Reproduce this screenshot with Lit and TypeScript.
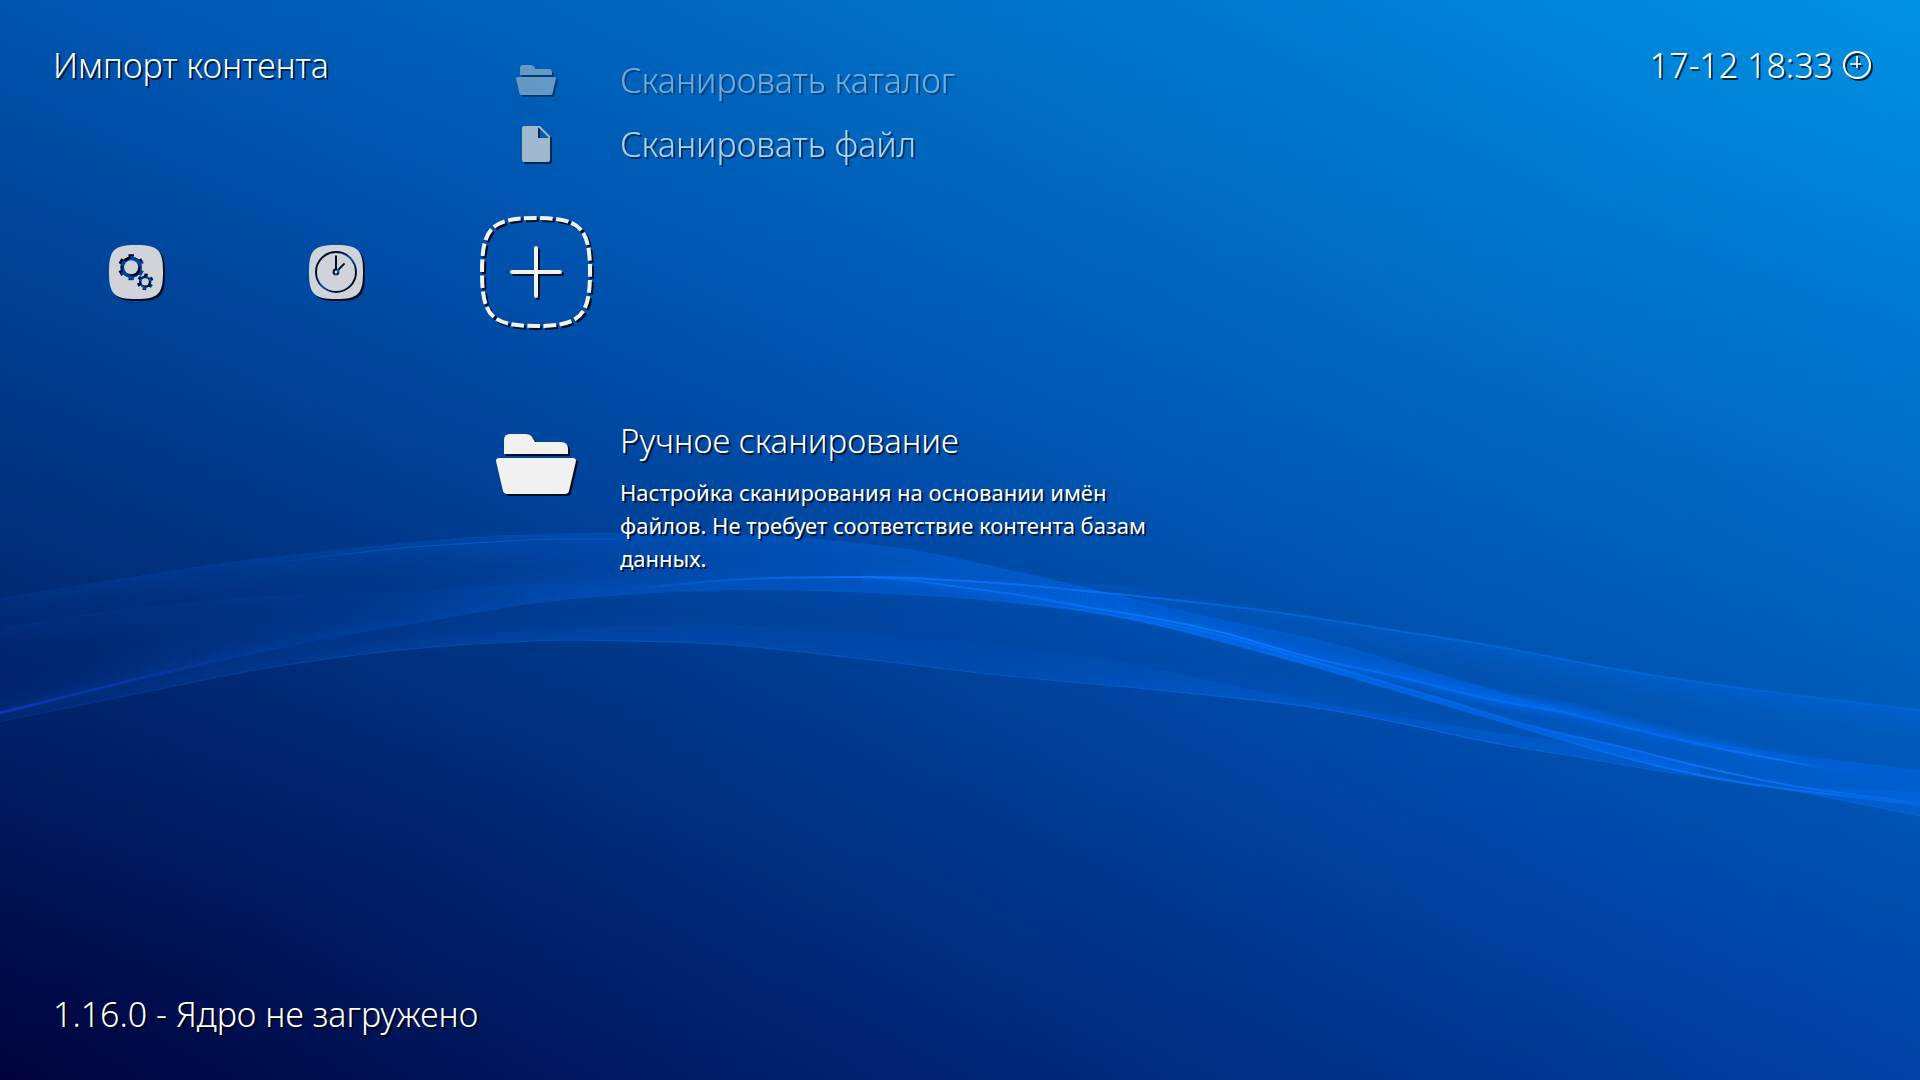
import { LitElement, html, svg, css, type SVGTemplateResult } from "lit";
import { customElement, state } from "lit/decorators.js";

type Point = [number, number];
type Stop = [number, number];

/* Wave edges, left to right, in a 1920 x 1080 space. */
const crest: Point[] = [[0, 598], [112, 580], [223, 563], [335, 550], [446, 539], [513, 535], [620, 533], [747, 535], [818, 539], [908, 549], [997, 567], [1109, 593], [1220, 619], [1332, 643], [1443, 675], [1555, 708], [1666, 735], [1778, 753], [1920, 770]];
const spine: Point[] = [[0, 713], [134, 680], [223, 660], [335, 637], [424, 622], [536, 603], [625, 595], [700, 591], [747, 590], [819, 591], [908, 595], [997, 601], [1086, 611], [1153, 624], [1220, 641], [1332, 672], [1443, 705], [1555, 738], [1622, 757], [1689, 773], [1756, 785], [1920, 805]];
const keel: Point[] = [[0, 722], [156, 690], [268, 668], [402, 650], [536, 641], [625, 641], [729, 645], [863, 659], [997, 675], [1176, 692], [1309, 707], [1399, 723], [1488, 742], [1577, 757], [1666, 772], [1756, 784], [1920, 816]];
const rise: Point[] = [[560, 598], [640, 588], [747, 579], [863, 577], [908, 578], [997, 583], [1086, 591], [1220, 605], [1309, 617], [1399, 631], [1488, 645], [1622, 670], [1756, 690], [1920, 710]];
const split: Point[] = [[863, 577], [908, 580], [952, 586], [1019, 595], [1086, 607], [1153, 618], [1220, 632], [1309, 657], [1399, 677], [1488, 699], [1555, 711], [1622, 727], [1711, 747], [1791, 762], [1920, 786]];
const under: Point[] = [[1130, 616], [1220, 635], [1309, 660], [1354, 673], [1443, 699], [1532, 726], [1622, 747], [1711, 769], [1800, 787], [1920, 803]];
const inner: Point[] = [[0, 628], [67, 617], [134, 608], [240, 598], [424, 590], [600, 580]];
const veil: Point[] = [[300, 655], [402, 640], [491, 633], [700, 625], [860, 632], [1000, 645], [1130, 664], [1220, 683], [1309, 701], [1399, 717], [1488, 731], [1577, 745], [1666, 763], [1756, 783], [1920, 792]];
const glint: Point[] = [[240, 567], [312, 558], [402, 548], [491, 542], [558, 539], [640, 540]];
const haze: Point[] = [[1020, 580], [1109, 585], [1220, 601], [1309, 614], [1399, 631]];

/* Height of an edge at x, by a Catmull-Rom curve through its points. */
function heightAt(edge: Point[], x: number): number {
  let i = 0;
  while (i < edge.length - 2 && x > edge[i + 1][0]) i++;
  const [x1, y1] = edge[i];
  const [x2, y2] = edge[i + 1];
  const [x0, y0] = edge[Math.max(0, i - 1)];
  const [x3, y3] = edge[Math.min(edge.length - 1, i + 2)];
  const span = x2 - x1;
  const t = (x - x1) / span;
  const m1 = ((y2 - y0) / (x2 - x0)) * span;
  const m2 = ((y3 - y1) / (x3 - x1)) * span;
  const t2 = t * t;
  const t3 = t2 * t;
  return (2 * t3 - 3 * t2 + 1) * y1 + (t3 - 2 * t2 + t) * m1 + (3 * t2 - 2 * t3) * y2 + (t3 - t2) * m2;
}

function trace(edge: Point[], from: number, to: number, shift = 0): string[] {
  const out: string[] = [];
  const steps = Math.max(2, Math.round((to - from) / 12));
  for (let i = 0; i <= steps; i++) {
    const x = from + ((to - from) * i) / steps;
    out.push(`${x.toFixed(1)},${(heightAt(edge, x) + shift).toFixed(1)}`);
  }
  return out;
}

let paintCount = 0;

function paint(stops: Stop[], color: string): { id: string; def: SVGTemplateResult } {
  const id = `wave-${paintCount++}`;
  return {
    id,
    def: svg`<linearGradient id=${id} gradientUnits="userSpaceOnUse" x1="0" y1="0" x2="1920" y2="0">
      ${stops.map(([x, a]) => svg`<stop offset=${x / 1920} stop-color=${color} stop-opacity=${a}></stop>`)}
    </linearGradient>`,
  };
}

function band(top: Point[], bottom: Point[], from: number, to: number, stops: Stop[], color = "#006cf4") {
  const p = paint(stops, color);
  const points = [...trace(top, from, to), ...trace(bottom, from, to).reverse()].join(" ");
  return svg`${p.def}<polygon points=${points} fill="url(#${p.id})"></polygon>`;
}

/* A glow that is strongest on the edge and fades over the given depth. */
function glow(edge: Point[], depth: number, stops: Stop[], color = "#006cf8") {
  const layers = 8;
  const from = edge[0][0];
  const to = edge[edge.length - 1][0];
  const p = paint(stops.map(([x, a]): Stop => [x, a / layers]), color);
  const near = trace(edge, from, to);
  return svg`${p.def}${Array.from({ length: layers }, (_, i) => {
    const far = trace(edge, from, to, (depth * (i + 1) * (i + 1)) / (layers * layers)).reverse();
    return svg`<polygon points=${[...near, ...far].join(" ")} fill="url(#${p.id})"></polygon>`;
  })}`;
}

function line(edge: Point[], width: number, stops: Stop[], color = "#0a78ff") {
  const p = paint(stops, color);
  const points = trace(edge, edge[0][0], edge[edge.length - 1][0]).join(" ");
  return svg`${p.def}<polyline points=${points} fill="none" stroke="url(#${p.id})" stroke-width=${width}></polyline>`;
}

const waves = svg`
  ${band(crest, spine, 0, 1130, [[0, 0.01], [400, 0.05], [700, 0.18], [900, 0.26], [1130, 0.45]])}
  ${band(crest, split, 1130, 1920, [[1130, 0.35], [1330, 0.22], [1600, 0.15], [1920, 0.3]])}
  ${band(spine, keel, 0, 1700, [[0, 0.06], [700, 0.06], [1200, 0.05], [1500, 0.03], [1700, 0.08]])}
  ${band(veil, keel, 300, 1920, [[300, 0.02], [600, 0.08], [1000, 0.06], [1350, 0.2], [1550, 0.25], [1920, 0.3]])}
  ${band(rise, crest, 1110, 1920, [[1110, 0.12], [1400, 0.02], [1920, 0.06]])}
  ${band(split, under, 1130, 1920, [[1130, 0.3], [1350, 0.06], [1600, 0.06], [1720, 0.16], [1920, 0.3]])}
  ${band(under, spine, 1130, 1700, [[1130, 0.7], [1350, 0.7], [1600, 0.6], [1700, 0.4]])}
  ${glow(crest, 28, [[0, 0.1], [500, 0.22], [900, 0.14], [1200, 0.2], [1500, 0.3], [1920, 0.3]])}
  ${glow(spine, -30, [[0, 0.1], [300, 0.2], [600, 0.34], [900, 0.26], [1100, 0.16], [1920, 0.16]])}
  ${glow(keel, -26, [[0, 0.08], [600, 0.2], [1000, 0.16], [1300, 0.3], [1600, 0.2], [1920, 0.24]])}
  ${glow(rise, 26, [[560, 0], [800, 0.12], [1000, 0.2], [1200, 0.12], [1500, 0.36], [1920, 0.34]])}
  ${glow(split, -12, [[863, 0.2], [1200, 0.4], [1350, 0.7], [1550, 1.6], [1700, 1.2], [1800, 0.3], [1900, 0]])}
  ${glow(split, 8, [[863, 0.3], [1200, 0.6], [1350, 1], [1500, 0.8], [1650, 0.2], [1850, 0]])}
  ${glow(inner, 22, [[0, 0.1], [160, 0.08], [600, 0.06]])}
  ${glow(haze, 10, [[1020, 0], [1100, 0.2], [1399, 0]])}
  ${line(spine, 3, [[0, 0.7], [120, 0.45], [260, 0.15], [400, 0]], "#0a40d0")}
  ${line(spine, 2, [[950, 0], [1100, 0.5], [1500, 0.1], [1700, 0.8], [1920, 0.4]])}
  ${line(rise, 2, [[600, 0], [860, 0.8], [1100, 0.7], [1250, 0.4], [1500, 0.4], [1920, 0.2]])}
  ${line(split, 2, [[863, 0.5], [1050, 0.6], [1250, 1], [1350, 0.5], [1650, 0.3], [1780, 0.8], [1830, 0]])}
  ${line(under, 2, [[1130, 0.2], [1250, 0.6], [1500, 0.3], [1720, 0.9], [1920, 0.3]])}
  ${line(keel, 1, [[0, 0.1], [600, 0.3], [1100, 0.3], [1400, 0.6], [1650, 0.3], [1920, 0.3]])}
  ${line(glint, 1, [[240, 0], [400, 0.4], [560, 0.4], [640, 0]])}
`;

const squircle = (c: number, r: number) => {
  const k = r * 0.82;
  return `M${c} ${c - r}C${c + k} ${c - r} ${c + r} ${c - k} ${c + r} ${c}C${c + r} ${c + k} ${c + k} ${c + r} ${c} ${c + r}C${c - k} ${c + r} ${c - r} ${c + k} ${c - r} ${c}C${c - r} ${c - k} ${c - k} ${c - r} ${c} ${c - r}Z`;
};

const gear = (cx: number, cy: number, body: number, tip: number, hole: number, tooth: number, turn: number) => svg`
  <g transform="translate(${cx} ${cy}) rotate(${turn})">
    <circle r=${body} fill="#000"></circle>
    ${[0, 60, 120, 180, 240, 300].map(
      (a) => svg`<rect x=${-tooth / 2} y=${-tip} width=${tooth} height=${tip} fill="#000" transform="rotate(${a})"></rect>`,
    )}
    <circle r=${hole} fill="#fff"></circle>
  </g>`;

const settingsIcon = html`<svg class="icon tile" viewBox="0 0 54 54" aria-hidden="true">
  <mask id="gears">
    <rect width="54" height="54" fill="#fff"></rect>
    ${gear(22.2, 22.2, 10.8, 13, 7, 5.4, 0)} ${gear(36.2, 36.8, 6.2, 8.2, 3.6, 3.6, 6)}
  </mask>
  <path d=${squircle(27, 27)} mask="url(#gears)"></path>
</svg>`;

const historyIcon = html`<svg class="icon tile" viewBox="0 0 54 54" aria-hidden="true">
  <mask id="dial">
    <rect width="54" height="54" fill="#fff"></rect>
    <g fill="none" stroke="#000" stroke-width="2">
      <circle cx="27" cy="27" r="20"></circle>
      <path d="M27 24.5V10.5M28.8 25.2L35.6 18.4"></path>
      <circle cx="27" cy="27" r="2.4"></circle>
    </g>
  </mask>
  <path d=${squircle(27, 27)} mask="url(#dial)"></path>
</svg>`;

const addIcon = html`<svg class="icon tile-active" viewBox="0 0 112 112" aria-hidden="true">
  <path d=${squircle(56, 54)} fill="none" stroke="#f1f1f1" stroke-width="4" pathLength="368" stroke-dasharray="12.6 3.4" stroke-dashoffset="-4"></path>
  <path d="M56 32V80M32 56H80" fill="none" stroke="#f1f1f1" stroke-width="4" stroke-linecap="round"></path>
</svg>`;

const folderIcon = html`<svg class="icon folder" viewBox="0 0 80 60" aria-hidden="true">
  <path d="M8 20V6Q8 0 14 0H29Q34 0 36 3L39 8H65Q72 8 72 15V20Z"></path>
  <path d="M3 24H77Q80 24 80 27L73 57Q72 60 69 60H11Q8 60 7 57L0 27Q0 24 3 24Z"></path>
</svg>`;

const fileIcon = html`<svg class="icon file" viewBox="0 0 28 36" aria-hidden="true">
  <path fill-rule="evenodd" d="M2 0H18L28 10V34Q28 36 26 36H2Q0 36 0 34V2Q0 0 2 0ZM16 1V12H27Z"></path>
</svg>`;

const clockIcon = html`<svg class="icon clock" viewBox="0 0 30 30" aria-hidden="true">
  <circle cx="15" cy="15" r="13" fill="none" stroke="#fff" stroke-width="2"></circle>
  <path d="M15 6V18M8 14H19" fill="none" stroke="#fff" stroke-width="1.6"></path>
</svg>`;

const tabs = [
  { label: "Настройки", icon: settingsIcon },
  { label: "История", icon: historyIcon },
  { label: "Импорт контента", icon: addIcon },
];

@customElement("app-root")
export class AppRoot extends LitElement {
  static styles = css`
    :host {
      display: block;
      color: #fff;
      font-family: "Noto Sans", "Open Sans", sans-serif;
      font-size: 34px;
      font-weight: 300;
      line-height: 44px;
    }
    .screen {
      position: relative;
      isolation: isolate;
      display: grid;
      grid-template: minmax(0, 1fr) auto / minmax(0, 1fr);
      min-height: 100vh;
      overflow: hidden;
      text-shadow: 2px 2px 0 rgba(0, 0, 0, 0.7);
      background:
        linear-gradient(to top left, rgba(0, 0, 150, 0.12), rgba(0, 0, 150, 0) 50%, rgba(0, 150, 230, 0) 50%, rgba(0, 150, 230, 0.12)),
        linear-gradient(to top right, #00023c 0%, #004ba7 50%, #0092e5 100%);
    }
    .waves {
      position: absolute;
      inset: 0;
      width: 100%;
      height: 100%;
      z-index: -1;
    }
    .bar {
      grid-area: 1 / 1;
      align-self: start;
      display: flex;
      justify-content: space-between;
      align-items: center;
      padding: 43px 48px 0 53px;
    }
    .title,
    .entry-title {
      margin: 0;
      font: inherit;
    }
    .entry-title {
      font-size: 33px;
    }
    .time {
      display: flex;
      align-items: center;
      gap: 9px;
    }
    .menu {
      grid-area: 1 / 1;
      padding-top: 48px;
    }
    .entry {
      display: grid;
      grid-template-columns: 168px minmax(0, 560px);
      align-items: center;
      margin-left: 452px;
      padding: 0;
      border: 0;
      background: none;
      color: inherit;
      font: inherit;
      text-align: left;
      text-shadow: inherit;
      min-height: 64px;
    }
    .far {
      opacity: 0.45;
    }
    .near {
      opacity: 0.7;
    }
    .entry .icon {
      fill: #e4e0d8;
    }
    .current {
      align-items: start;
    }
    .entry.current .icon {
      fill: #f1f1f1;
    }
    .tabs {
      display: grid;
      grid-template-columns: repeat(3, 200px);
      height: 192px;
      padding-left: 36px;
      margin-bottom: 51px;
    }
    .tab {
      display: grid;
      place-items: center;
      padding: 0;
      border: 0;
      background: none;
    }
    .icon {
      display: block;
      justify-self: center;
      overflow: visible;
      fill: #f1f1f1;
      filter: drop-shadow(2px 2px 0 rgba(0, 0, 0, 0.8));
    }
    .tile {
      width: 54px;
      height: 54px;
      fill: #d0d4da;
    }
    .tile-active {
      width: 112px;
      height: 112px;
    }
    .folder {
      width: 40px;
      height: 30px;
    }
    .current .folder {
      width: 80px;
      height: 60px;
      margin-top: 15px;
    }
    .file {
      width: 28px;
      height: 36px;
    }
    .clock {
      width: 30px;
      height: 30px;
    }
    .note {
      margin: 13px 0 0;
      font-size: 22px;
      font-weight: 400;
      line-height: 33px;
    }
    .status {
      padding: 0 53px 44px;
    }
  `;

  @state() private active = 2;

  render() {
    return html`
      <div class="screen">
        <svg class="waves" viewBox="0 0 1920 1080" preserveAspectRatio="none" aria-hidden="true">${waves}</svg>
        <header class="bar">
          <h1 class="title">${tabs[this.active].label}</h1>
          <div class="time"><time>17-12 18:33</time>${clockIcon}</div>
        </header>
        <main class="menu">
          <button class="entry far">${folderIcon}<span>Сканировать каталог</span></button>
          <button class="entry near">${fileIcon}<span>Сканировать файл</span></button>
          <nav class="tabs">
            ${tabs.map(
              (tab, i) => html`<button class="tab" aria-label=${tab.label} aria-pressed=${i === this.active ? "true" : "false"}>
                ${tab.icon}
              </button>`,
            )}
          </nav>
          <section class="entry current">
            ${folderIcon}
            <div>
              <h2 class="entry-title">Ручное сканирование</h2>
              <p class="note">
                Настройка сканирования на основании имён файлов. Не требует соответствие контента базам данных.
              </p>
            </div>
          </section>
        </main>
        <footer class="status">1.16.0 - Ядро не загружено</footer>
      </div>
    `;
  }
}
